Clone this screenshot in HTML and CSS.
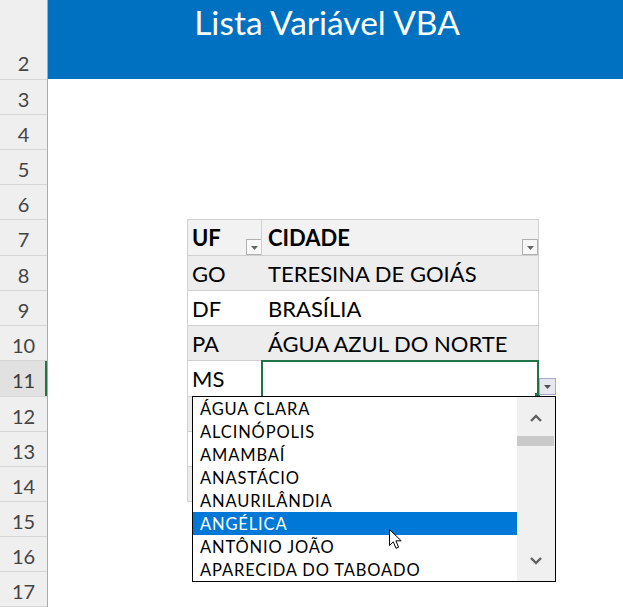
FILE: index.html
```html
<!DOCTYPE html>
<html lang="pt-BR">
<head>
<meta charset="utf-8">
<title>Lista Variável VBA</title>
<link rel="stylesheet" href="styles.css">
</head>
<body>
<div class="app">
  <div class="rowheads">
    <div class="rh rh-top"></div>
    <div class="rh tall"><span>2</span></div>
    <div class="rh"><span>3</span></div>
    <div class="rh"><span>4</span></div>
    <div class="rh"><span>5</span></div>
    <div class="rh"><span>6</span></div>
    <div class="rh tall"><span>7</span></div>
    <div class="rh"><span>8</span></div>
    <div class="rh"><span>9</span></div>
    <div class="rh"><span>10</span></div>
    <div class="rh tall active"><span>11</span></div>
    <div class="rh"><span>12</span></div>
    <div class="rh"><span>13</span></div>
    <div class="rh"><span>14</span></div>
    <div class="rh"><span>15</span></div>
    <div class="rh"><span>16</span></div>
    <div class="rh"><span>17</span></div>
  </div>

  <div class="sheet">
    <div class="banner"><h1 class="title">Lista Variável VBA</h1></div>
    <div class="gap"></div>
    <div class="tbl">
      <div class="tr thead">
        <div class="td uf"><span>UF</span><i class="fbtn"><svg width="7" height="4" viewBox="0 0 7 4"><path d="M0 0h7L3.5 4z" fill="#666"/></svg></i></div>
        <div class="td cid sep"><span>CIDADE</span><i class="fbtn"><svg width="7" height="4" viewBox="0 0 7 4"><path d="M0 0h7L3.5 4z" fill="#666"/></svg></i></div>
      </div>
      <div class="tr band"><div class="td uf">GO</div><div class="td cid">TERESINA DE GOIÁS</div></div>
      <div class="tr"><div class="td uf">DF</div><div class="td cid">BRASÍLIA</div></div>
      <div class="tr band"><div class="td uf">PA</div><div class="td cid">ÁGUA AZUL DO NORTE</div></div>
      <div class="tr tall"><div class="td uf">MS</div><div class="td cid"></div></div>
      <div class="tr band"><div class="td uf"></div><div class="td cid"></div></div>
      <div class="tr"><div class="td uf"></div><div class="td cid"></div></div>
      <div class="tr band"><div class="td uf"></div><div class="td cid"></div></div>
    </div>
  </div>

  <div class="selection"></div>
  <div class="fill-handle"></div>
  <div class="dv-btn"><svg width="7" height="4" viewBox="0 0 7 4"><path d="M0 0h7L3.5 4z" fill="#505050"/></svg></div>

  <div class="dd-list">
    <ul class="items">
      <li>ÁGUA CLARA</li>
      <li>ALCINÓPOLIS</li>
      <li>AMAMBAÍ</li>
      <li>ANASTÁCIO</li>
      <li>ANAURILÂNDIA</li>
      <li class="sel">ANGÉLICA</li>
      <li>ANTÔNIO JOÃO</li>
      <li>APARECIDA DO TABOADO</li>
    </ul>
    <div class="scroll">
      <div class="sb-btn up"><svg width="12" height="8" viewBox="0 0 12 8"><path d="M1 7L6 2l5 5" stroke="#606060" stroke-width="2.4" fill="none"/></svg></div>
      <div class="thumb"></div>
      <div class="sb-space"></div>
      <div class="sb-btn down"><svg width="12" height="8" viewBox="0 0 12 8"><path d="M1 1l5 5 5-5" stroke="#606060" stroke-width="2.4" fill="none"/></svg></div>
    </div>
  </div>

  <svg class="pointer" width="14" height="21" viewBox="0 0 14 21"><path d="M0.5 0.5V16.5L4.3 12.8L7 19.3L9.6 18.2L6.9 11.8H12.2Z" fill="#fff" stroke="#000" stroke-width="1" stroke-linejoin="round"/></svg>
</div>
</body>
</html>
```

FILE: styles.css
```css
html, body {
  margin: 0;
  padding: 0;
  background: #fff;
}
body {
  width: 623px;
  height: 607px;
  overflow: hidden;
  font-family: Lato, "Open Sans", sans-serif;
}
.app {
  position: relative;
  display: grid;
  grid-template-columns: 48px 575px;
  height: 607px;
}

/* row headers */
.rowheads {
  display: flex;
  flex-direction: column;
  background: #efefef;
  border-right: 1px solid #ababab;
}
.rh {
  box-sizing: border-box;
  height: 35px;
  border-bottom: 1px solid #d6d6d6;
  display: flex;
  justify-content: center;
  font-size: 20px;
  line-height: 34px;
  padding-top: 2px;
  color: #444;
}
.rh.tall { height: 36px; }
.rh-top { height: 44px; border-bottom: none; }
.rh.active {
  background: #e1e1e1;
  box-shadow: inset -2px 0 0 #217346;
  color: #3a3a3a;
}

/* sheet */
.sheet {
  display: flex;
  flex-direction: column;
}
.banner {
  height: 79px;
  background: #0070c0;
  padding-right: 17px;
}
.title {
  margin: 0;
  font-weight: normal;
  font-size: 33.5px;
  line-height: 44px;
  color: #fff;
  text-align: center;
}
.gap { height: 140px; }

.tbl {
  margin-left: 139px;
  width: 352px;
  box-sizing: border-box;
  border: 1px solid #d0d0d0;
  border-bottom: none;
  font-size: 22px;
  color: #000;
}
.tr {
  box-sizing: border-box;
  height: 35px;
  display: grid;
  grid-template-columns: 74px 276px;
  border-bottom: 1px solid #d0d0d0;
}
.tr.tall { height: 36px; }
.tr.thead {
  height: 36px;
  background: #f2f2f2;
  font-weight: bold;
}
.tr.band { background: #ededed; }
.td {
  display: flex;
  padding-left: 4px;
  line-height: 34px;
  padding-top: 1px;
  white-space: nowrap;
}
.td.cid { padding-left: 6px; }
.td.sep {
  border-left: 1px solid #d0d0d0;
  margin-left: -1px;
}
.fbtn {
  margin-left: auto;
  align-self: flex-end;
  width: 16px;
  height: 16px;
  box-sizing: border-box;
  border: 1px solid #b0b0b0;
  background: #f8f8f8;
  display: flex;
  align-items: center;
  justify-content: center;
  padding-top: 1px;
}

/* overlays */
.selection {
  position: absolute;
  left: 261px;
  top: 360px;
  width: 278px;
  height: 38px;
  box-sizing: border-box;
  border: 2px solid #217346;
}
.fill-handle {
  position: absolute;
  left: 535px;
  top: 393px;
  width: 5px;
  height: 5px;
  background: #217346;
}
.dv-btn {
  position: absolute;
  left: 539px;
  top: 378px;
  width: 17px;
  height: 17px;
  box-sizing: border-box;
  border: 1px solid #a3a8cc;
  background: #e7e7ee;
  display: flex;
  align-items: center;
  justify-content: center;
  padding-top: 1px;
}

.dd-list {
  position: absolute;
  left: 192px;
  top: 396px;
  width: 364px;
  height: 186px;
  box-sizing: border-box;
  border: 1px solid #000;
  background: #fff;
  display: grid;
  grid-template-columns: 324px 38px;
}
.items {
  list-style: none;
  margin: 0;
  padding: 0;
  font-size: 16.5px;
  letter-spacing: 0.85px;
  color: #000;
}
.items li {
  height: 23px;
  line-height: 21px;
  padding-top: 2px;
  padding-left: 7px;
  box-sizing: border-box;
  white-space: nowrap;
}
.items li.sel {
  background: #0078d7;
  color: #fff;
}
.scroll {
  background: #f0f0f0;
  display: flex;
  flex-direction: column;
}
.sb-btn {
  display: flex;
  justify-content: center;
  align-items: center;
}
.sb-btn.up { height: 39px; padding-top: 3px; box-sizing: border-box; }
.sb-btn.down { height: 40px; }
.thumb {
  height: 10px;
  margin-right: 1px;
  background: #c9c9c9;
}
.sb-space { flex: 1; }

.pointer {
  position: absolute;
  left: 389px;
  top: 529px;
}
```
